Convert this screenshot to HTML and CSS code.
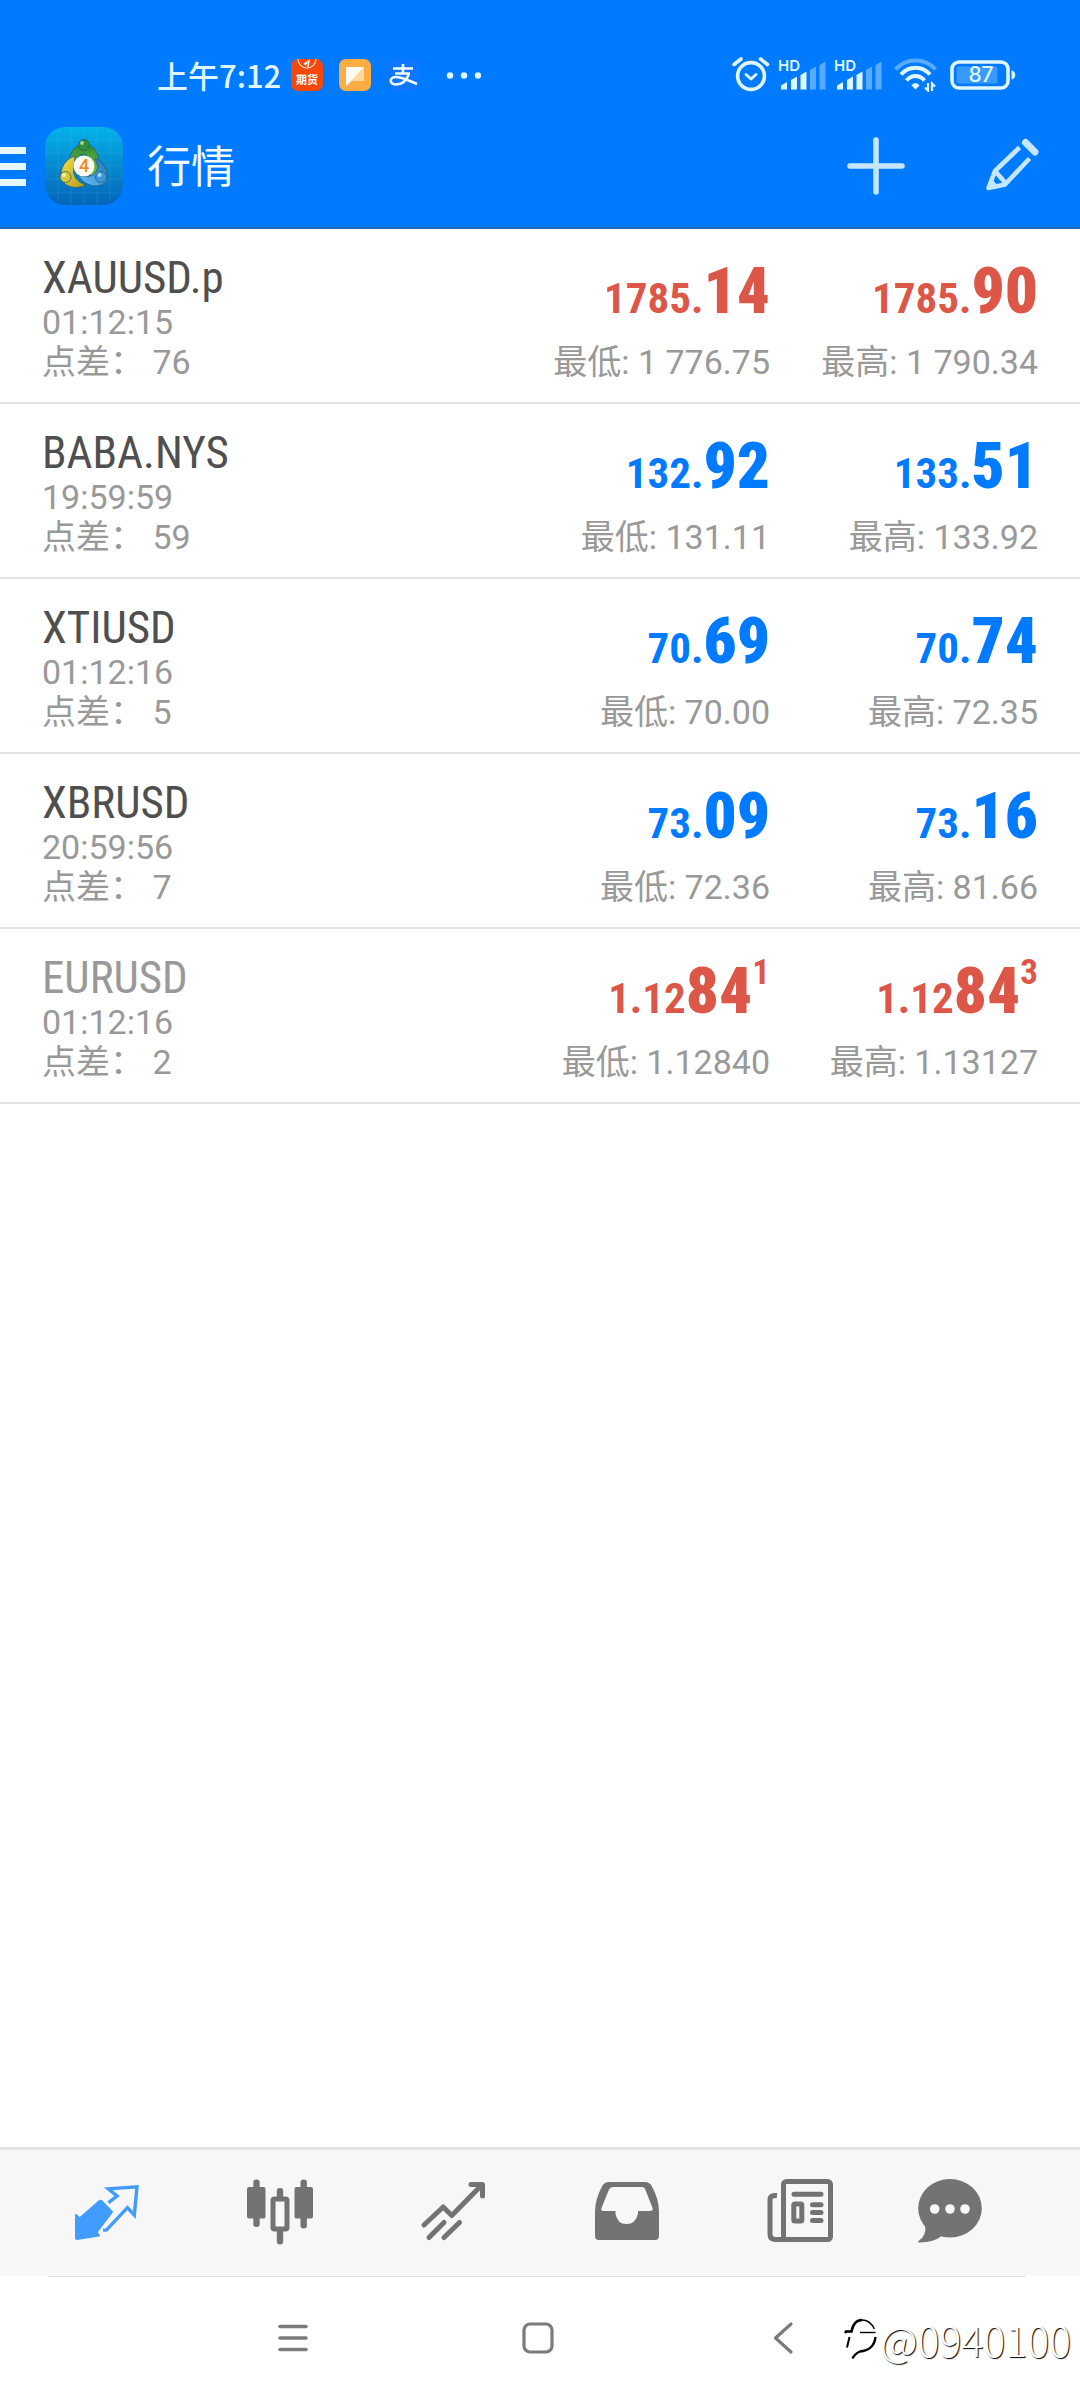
FILE: index.html
```
<!DOCTYPE html>
<html lang="zh-CN">
<head>
<meta charset="utf-8">
<meta name="viewport" content="width=device-width, initial-scale=1">
<title>行情</title>
<link rel="stylesheet" href="styles.css">
</head>
<body>
<header class="header">
  <div class="status">
    <div class="status-left">
      <time class="clock">上午7:12</time>
      <div class="notices">
        <svg width="32" height="32" viewBox="0 0 32 32" aria-hidden="true">
          <rect width="32" height="32" rx="7" fill="#f4490c"/>
          <path d="M7 0a9 9 0 0 0 18 0" fill="none" stroke="#ffd9c8" stroke-width="1.2"/>
          <path d="M13 5l5-3-1 6M14 6l2-2" fill="none" stroke="#fff" stroke-width="1.4"/>
          <text class="badge-text" x="16" y="25" text-anchor="middle">期货</text>
        </svg>
        <svg width="32" height="32" viewBox="0 0 32 32" aria-hidden="true">
          <rect width="32" height="32" rx="7" fill="#ffad42"/>
          <path d="M7 8h18v14H13l-6 5z" fill="#ffd8a0"/>
          <path d="M7 8h18L7 27z" fill="#fffaf2"/>
        </svg>
        <svg width="32" height="32" viewBox="0 0 32 32" aria-hidden="true">
          <rect width="32" height="32" rx="7" fill="#0f76ff"/>
          <g fill="none" stroke="#f2fcff" stroke-width="2.6">
            <path d="M6 9.500h20M16 5v9M8 14.500h15"/>
            <path d="M22 14.500c-2 6-6 11-13 11-7 0-7-7.500 0-7.500 6 0 13 4 21 7"/>
          </g>
        </svg>
        <svg width="46" height="32" viewBox="0 0 46 32" aria-hidden="true" fill="#dff6ff">
          <circle cx="15" cy="16.500" r="3.200"/><circle cx="29" cy="16.500" r="3.200"/><circle cx="43" cy="16.500" r="3.200"/>
        </svg>
      </div>
    </div>
    <div class="status-right">
      <svg width="38" height="36" viewBox="0 0 38 36" aria-hidden="true" fill="none" stroke="#dff6ff" stroke-linecap="round">
        <circle cx="19" cy="19" r="13.400" stroke-width="3.600"/>
        <path d="M14 17.500l5 4.500 5-4.500" stroke-width="3" stroke-linejoin="round"/>
        <path d="M2 7.500l7-5.500M28.500 2l7 5.500" stroke-width="3.600"/>
      </svg>
      <svg width="48" height="46" viewBox="0 -6 48 46" aria-hidden="true">
        <text class="hd" x="0" y="13">HD</text>
        <g fill="#dff6ff"><path d="M3 31.500v-4l6-3.500v7.500zM13 31.500V22l6-3.500v13zM22.500 31.500V17l6-3.500v18z"/></g>
        <g fill="#dff6ff" opacity=".4"><path d="M32 31.500v-19.500l6-3.500v23zM41.500 31.500V7l6-3.500v28z"/></g>
      </svg>
      <svg width="48" height="46" viewBox="0 -6 48 46" aria-hidden="true">
        <text class="hd" x="0" y="13">HD</text>
        <g fill="#dff6ff"><path d="M3 31.500v-4l6-3.500v7.500zM13 31.500V22l6-3.500v13zM22.500 31.500V17l6-3.500v18z"/></g>
        <g fill="#dff6ff" opacity=".4"><path d="M32 31.500v-19.500l6-3.500v23zM41.500 31.500V7l6-3.500v28z"/></g>
      </svg>
      <svg class="wifi" width="44" height="34" viewBox="0 0 44 34" aria-hidden="true" fill="none" stroke="#dff6ff">
        <path d="M1.500 11.500C12-.500 31-.500 41.500 11.500" stroke-width="4" opacity=".4"/>
        <path d="M7 16.500c8-9 21-9 29 0" stroke-width="4"/>
        <path d="M12.500 22.500c5-6 13-6 18 0" stroke-width="4"/>
        <path d="M17.500 27.500c2-3.500 6-3.500 8 0l-4 4z" fill="#dff6ff" stroke="none"/>
        <path d="M34 25v7.500l-3-3M38 33v-7.500l3 3" stroke-width="2.200"/>
      </svg>
      <svg class="battery" width="66" height="30" viewBox="0 0 66 30" aria-hidden="true">
        <rect x="2" y="2" width="56" height="26" rx="7" fill="none" stroke="#dff6ff" stroke-width="3.600"/>
        <rect x="6.500" y="6.500" width="41" height="17" rx="2" fill="#dff6ff" opacity=".25"/>
        <path d="M61.500 10.500c5 0 5 9 0 9z" fill="#dff6ff"/>
        <text class="charge" x="31" y="22" text-anchor="middle">87</text>
      </svg>
    </div>
  </div>
  <div class="appbar">
    <button class="icon-btn drawer" type="button" aria-label="菜单">
      <svg width="26" height="40" viewBox="0 0 26 40" fill="#e4f6ff"><path d="M0 1h26v7H0zM0 17h26v7H0zM0 33h26v7H0z"/></svg>
    </button>
    <svg class="app-logo" width="78" height="78" viewBox="0 0 78 78" aria-hidden="true">
      <defs>
        <linearGradient id="tile" x1="0" y1="0" x2="0" y2="1"><stop offset="0" stop-color="#04b2ea"/><stop offset=".6" stop-color="#0682cb"/><stop offset="1" stop-color="#0465b9"/></linearGradient>
        <linearGradient id="green" x1="0" y1="0" x2="0" y2="1"><stop offset="0" stop-color="#2b8a35"/><stop offset="1" stop-color="#7cc243"/></linearGradient>
        <linearGradient id="yellow" x1="0" y1="0" x2="1" y2="1"><stop offset="0" stop-color="#f3df4b"/><stop offset="1" stop-color="#b69c1c"/></linearGradient>
        <linearGradient id="blue" x1="1" y1="0" x2="0" y2="1"><stop offset="0" stop-color="#1c70bd"/><stop offset="1" stop-color="#6cc4f4"/></linearGradient>
      </defs>
      <rect width="78" height="78" rx="20" fill="url(#tile)"/>
      <path d="M13 3v72M26 0v78M39 0v78M52 0v78M65 3v72M3 13h72M0 26h78M0 39h78M0 52h78M3 66h72" stroke="#5cd0f5" stroke-width=".6" opacity=".25"/>
      <g stroke="#2b5f6b" stroke-width=".8">
        <path d="M25 41c-2-13 3-23 14-24 11 1 17 11 14 24-2 5-5 8-8 8 3-10 1-19-6-22-6 1-10 7-14 14z" fill="url(#green)"/>
        <path d="M30 29c-10 3-15 12-14 23 4 8 15 11 25 6-9-3-14-9-12-18z" fill="url(#yellow)"/>
        <path d="M50 31c9 4 14 13 12 23-7 8-22 6-29-6 9 4 18 1 20-8z" fill="url(#blue)"/>
        <circle cx="39" cy="18" r="5.500" fill="#2f8f3a"/>
        <circle cx="20.500" cy="50" r="5.500" fill="#d9c535"/>
        <circle cx="56" cy="50" r="5.500" fill="#3a97dc"/>
      </g>
      <circle cx="37" cy="16" r="2" fill="#9bd59a"/><circle cx="19" cy="48" r="2" fill="#fbf3a8"/><circle cx="54.500" cy="48" r="2" fill="#a9dcfa"/>
      <circle cx="39" cy="39" r="10.500" fill="#fbf8f4"/>
      <text class="logo-digit" x="39" y="45" text-anchor="middle">4</text>
    </svg>
    <h1 class="title">行情</h1>
    <button class="icon-btn" type="button" aria-label="添加">
      <svg width="60" height="60" viewBox="0 0 60 60" stroke="#c5e6ff" stroke-width="5.600" stroke-linecap="round"><path d="M30 4v52M4 30h52"/></svg>
    </button>
    <button class="icon-btn edit" type="button" aria-label="编辑">
      <svg width="64" height="64" viewBox="0 0 64 64" fill="none" stroke="#c5e6ff" stroke-width="4.600" stroke-linejoin="round">
        <path d="M39.500 13.500L15 37 8.500 54 25 50.500 49.500 24.500M15 37l11 12.500"/>
        <path d="M8.500 54l3-9 5 6z" fill="#c5e6ff" stroke-width="1"/>
        <path d="M45.500 8.500l9.500 9.500" stroke-width="7" stroke-linecap="round"/>
      </svg>
    </button>
  </div>
</header>

<main class="quotes">
  <ul class="quote-list">
    <li class="quote">
      <div class="info"><h2 class="symbol">XAUUSD.p</h2><time class="time">01:12:15</time><p class="meta">点差： 76</p></div>
      <div class="side down"><p class="price">1785.<b class="big">14</b></p><p class="meta">最低: 1 776.75</p></div>
      <div class="side down"><p class="price">1785.<b class="big">90</b></p><p class="meta">最高: 1 790.34</p></div>
    </li>
    <li class="quote">
      <div class="info"><h2 class="symbol">BABA.NYS</h2><time class="time">19:59:59</time><p class="meta">点差： 59</p></div>
      <div class="side up"><p class="price">132.<b class="big">92</b></p><p class="meta">最低: 131.11</p></div>
      <div class="side up"><p class="price">133.<b class="big">51</b></p><p class="meta">最高: 133.92</p></div>
    </li>
    <li class="quote">
      <div class="info"><h2 class="symbol">XTIUSD</h2><time class="time">01:12:16</time><p class="meta">点差： 5</p></div>
      <div class="side up"><p class="price">70.<b class="big">69</b></p><p class="meta">最低: 70.00</p></div>
      <div class="side up"><p class="price">70.<b class="big">74</b></p><p class="meta">最高: 72.35</p></div>
    </li>
    <li class="quote">
      <div class="info"><h2 class="symbol">XBRUSD</h2><time class="time">20:59:56</time><p class="meta">点差： 7</p></div>
      <div class="side up"><p class="price">73.<b class="big">09</b></p><p class="meta">最低: 72.36</p></div>
      <div class="side up"><p class="price">73.<b class="big">16</b></p><p class="meta">最高: 81.66</p></div>
    </li>
    <li class="quote">
      <div class="info"><h2 class="symbol muted">EURUSD</h2><time class="time">01:12:16</time><p class="meta">点差： 2</p></div>
      <div class="side down"><p class="price">1.12<b class="big">84</b><sup class="pip">1</sup></p><p class="meta">最低: 1.12840</p></div>
      <div class="side down"><p class="price">1.12<b class="big">84</b><sup class="pip">3</sup></p><p class="meta">最高: 1.13127</p></div>
    </li>
  </ul>
</main>

<nav class="tabs" aria-label="主导航">
  <a class="tab active" href="#quotes" aria-label="行情" aria-current="page">
    <svg width="72" height="72" viewBox="0 0 72 72">
      <path d="M5 39l3.500 3.500L28 25.500q1.500-1.500 3 0L41 36 25.500 56.500l2.500 3L6 63q-1 0-1-1z" fill="currentColor" stroke="currentColor" stroke-width="2" stroke-linejoin="round"/>
      <path d="M37.500 26.700l8.600-6.700-8.800-7.200L66 10.800 63.300 39l-6.900-7.300-21 22.400H32" fill="none" stroke="currentColor" stroke-width="3.400"/>
    </svg>
  </a>
  <a class="tab" href="#chart" aria-label="图表">
    <svg width="72" height="72" viewBox="0 0 72 72" fill="currentColor">
      <rect x="3" y="11" width="18.500" height="31.500" rx="2"/><rect x="9.300" y="3.500" width="6.400" height="47.500" rx="3"/>
      <rect x="50.500" y="11" width="18.500" height="31.500" rx="2"/><rect x="56.500" y="3.500" width="6.400" height="49" rx="3"/>
      <rect x="32.800" y="12" width="6.400" height="12" rx="3"/><rect x="32.800" y="52" width="6.400" height="16.500" rx="3"/>
      <rect x="29" y="23" width="14" height="30" rx="1.500" fill="none" stroke="currentColor" stroke-width="5"/>
    </svg>
  </a>
  <a class="tab" href="#trade" aria-label="交易">
    <svg width="72" height="72" viewBox="0 0 72 72" fill="none" stroke="currentColor" stroke-width="5" stroke-linecap="round" stroke-linejoin="round">
      <path d="M7 49l19.200-18 8.600 8.500L65 8.800M54 8.500h11.500V20" /><path d="M12 61.500l15-15M27 61.500l15.500-15"/>
    </svg>
  </a>
  <a class="tab" href="#history" aria-label="历史">
    <svg width="72" height="72" viewBox="0 0 72 72" fill="currentColor">
      <path fill-rule="evenodd" d="M18 6h36q5 0 7 4.500 7 13 7 25V60q0 4-4 4H8q-4 0-4-4V35.500q0-12 7-25Q13 6 18 6zM22 11q-3 0-4 2.500L10.500 32q-1 3 2 3H24.500v3q2 10 11 10t11.500-10v-3H59q3.500 0 2.500-3L54.500 14Q53.500 11 51 11z"/>
    </svg>
  </a>
  <a class="tab" href="#news" aria-label="新闻">
    <svg width="72" height="72" viewBox="0 0 72 72" fill="none" stroke="currentColor" stroke-width="5">
      <rect x="19.500" y="5.500" width="47" height="58" rx="3"/>
      <path d="M13 19.500q-7-.500-7 4V58q0 5.500 5.500 5.500H22"/>
      <path d="M30 18.300h27M48.500 28.700h8.500M48.500 36.500h8.500M48.500 44.500h8.500" stroke-linecap="round"/>
      <rect x="29.800" y="28" width="8" height="17" rx="1"/>
    </svg>
  </a>
  <a class="tab" href="#chat" aria-label="聊天">
    <svg width="72" height="72" viewBox="0 0 72 72" fill="currentColor">
      <ellipse cx="36" cy="32.300" rx="31.800" ry="29.300"/>
      <path d="M11 48q2 12-6.500 17-1 1.500 1 1.500 14 0 23-7z"/>
      <g fill="#f7f7f7"><circle cx="20.700" cy="33" r="4.800"/><circle cx="36" cy="33" r="4.800"/><circle cx="51" cy="33" r="4.800"/></g>
    </svg>
  </a>
</nav>

<footer class="sysnav">
  <div class="sysnav-keys">
    <button class="icon-btn" type="button" aria-label="最近任务">
      <svg width="36" height="36" viewBox="0 0 36 36" stroke="#7b7b7b" stroke-width="3.600" stroke-linecap="round"><path d="M5 6.500h26M5 18h26M5 29.500h26"/></svg>
    </button>
    <button class="icon-btn" type="button" aria-label="主屏幕">
      <svg width="36" height="36" viewBox="0 0 36 36" fill="none" stroke="#7b7b7b" stroke-width="3.200"><rect x="4" y="4" width="28" height="28" rx="6"/></svg>
    </button>
    <button class="icon-btn" type="button" aria-label="返回">
      <svg width="36" height="36" viewBox="0 0 36 36" fill="none" stroke="#7b7b7b" stroke-width="3.200" stroke-linecap="round" stroke-linejoin="round"><path d="M26 4L10.500 18 26 32"/></svg>
    </button>
  </div>
  <div class="watermark">
    <svg width="40" height="50" viewBox="0 0 40 50" aria-hidden="true" fill="none" stroke="#000">
      <path d="M5 19l1-1.500h5.500C13 10 17 6 22 6" stroke-width="2.600"/>
      <path d="M22 6q8 0 12.500 9" stroke-width="1.400"/>
      <path d="M20 18.500h15.500" stroke-width="1.400"/>
      <path d="M9.500 23L7 33.500" stroke-width="2"/>
      <path d="M35.500 23c-1 9-7 14-15.500 14.500-4 1.500-6 4-7.500 7" stroke-width="2.400"/>
    </svg>
    <span>@0940100</span>
  </div>
</footer>
</body>
</html>
```
FILE: styles.css
```
* { box-sizing: border-box; margin: 0; padding: 0; }

body {
  min-height: 100vh;
  display: flex;
  flex-direction: column;
  background: #fff;
  color: #999;
  font-family: Roboto, "Noto Sans CJK SC", sans-serif;
}

svg { display: block; flex: none; }

.icon-btn { border: 0; background: none; cursor: pointer; }

/* Header */
.header { background: #007aff; border-bottom: 2px solid #1769c2; }

.status {
  display: flex;
  justify-content: space-between;
  align-items: center;
  height: 105px;
  padding: 45px 64px 0 157px;
}
.status-left, .status-right, .notices { display: flex; align-items: center; }
.status-left { gap: 10px; }
.notices { gap: 16px; }
.status-right { gap: 8px; }
.wifi { margin-left: 4px; }
.battery { margin-left: 4px; }
.clock {
  color: #dff6ff;
  font: 500 31px/44px "Noto Sans CJK SC", sans-serif;
}
.badge-text { fill: #fff; font: 700 11px "Noto Sans CJK SC", sans-serif; }
.hd { fill: #dff6ff; font: 600 15px Inter, sans-serif; }
.charge { fill: #dff6ff; font: 500 21px Inter, sans-serif; }

.appbar {
  display: flex;
  align-items: center;
  height: 122px;
  padding-right: 36px;
}
.drawer { margin-right: 19px; }
.app-logo { margin-right: 24px; }
.logo-digit { fill: #ef8a2b; font: 500 18px Roboto, sans-serif; }
.title {
  flex: 1;
  padding-bottom: 4px;
  color: #f0faff;
  font: 400 44px/60px "Noto Sans CJK SC", sans-serif;
}
.edit { margin-left: 74px; }

/* Quotes */
.quotes { flex: 1; }
.quote-list { list-style: none; }
.quote {
  display: grid;
  grid-template-columns: 1fr 268px 268px;
  padding: 23px 42px 18px;
  border-bottom: 2px solid #e2e2e2;
}
.symbol {
  color: #4f4f4f;
  font: 400 45px/52px "Roboto Condensed", Roboto, sans-serif;
}
.muted { color: #999; }
.time { display: block; font-size: 34px; line-height: 36px; }
.meta {
  font-size: 34px;
  line-height: 44px;
  white-space: nowrap;
}
.side {
  display: flex;
  flex-direction: column;
  justify-content: flex-end;
  text-align: right;
}
.price {
  margin-bottom: 12px;
  font: 700 43px/60px "Roboto Condensed", Roboto, sans-serif;
  white-space: nowrap;
}
.big { font-size: 65px; }
.pip { font-size: 35px; line-height: 0; vertical-align: 29px; }
.up .price { color: #007aff; }
.down .price { color: #dc5748; }

/* Bottom tabs */
.tabs {
  display: grid;
  grid-template-columns: repeat(5, 173fr) 126fr;
  justify-items: center;
  align-items: center;
  height: 129px;
  padding: 0 67px 3px 20px;
  background: #f7f7f7;
  border-top: 3px solid #e2e2e2;
}
.tab { color: #737373; }
.active { color: #419cff; }

/* System navigation */
.sysnav { position: relative; height: 124px; }
.sysnav::before {
  content: "";
  display: block;
  height: 1px;
  margin: 0 54px 0 48px;
  background: #e2e2e2;
}
.sysnav-keys {
  display: grid;
  grid-template-columns: repeat(3, 1fr);
  justify-items: center;
  align-items: center;
  height: 122px;
  padding: 0 175px 0 170px;
}
.watermark {
  position: absolute;
  right: 9px;
  top: 38px;
  display: flex;
  align-items: center;
  color: #fff;
  font: 300 41px/50px "Noto Sans CJK SC", sans-serif;
  text-shadow: 1px 1px 1px #000;
}
```
